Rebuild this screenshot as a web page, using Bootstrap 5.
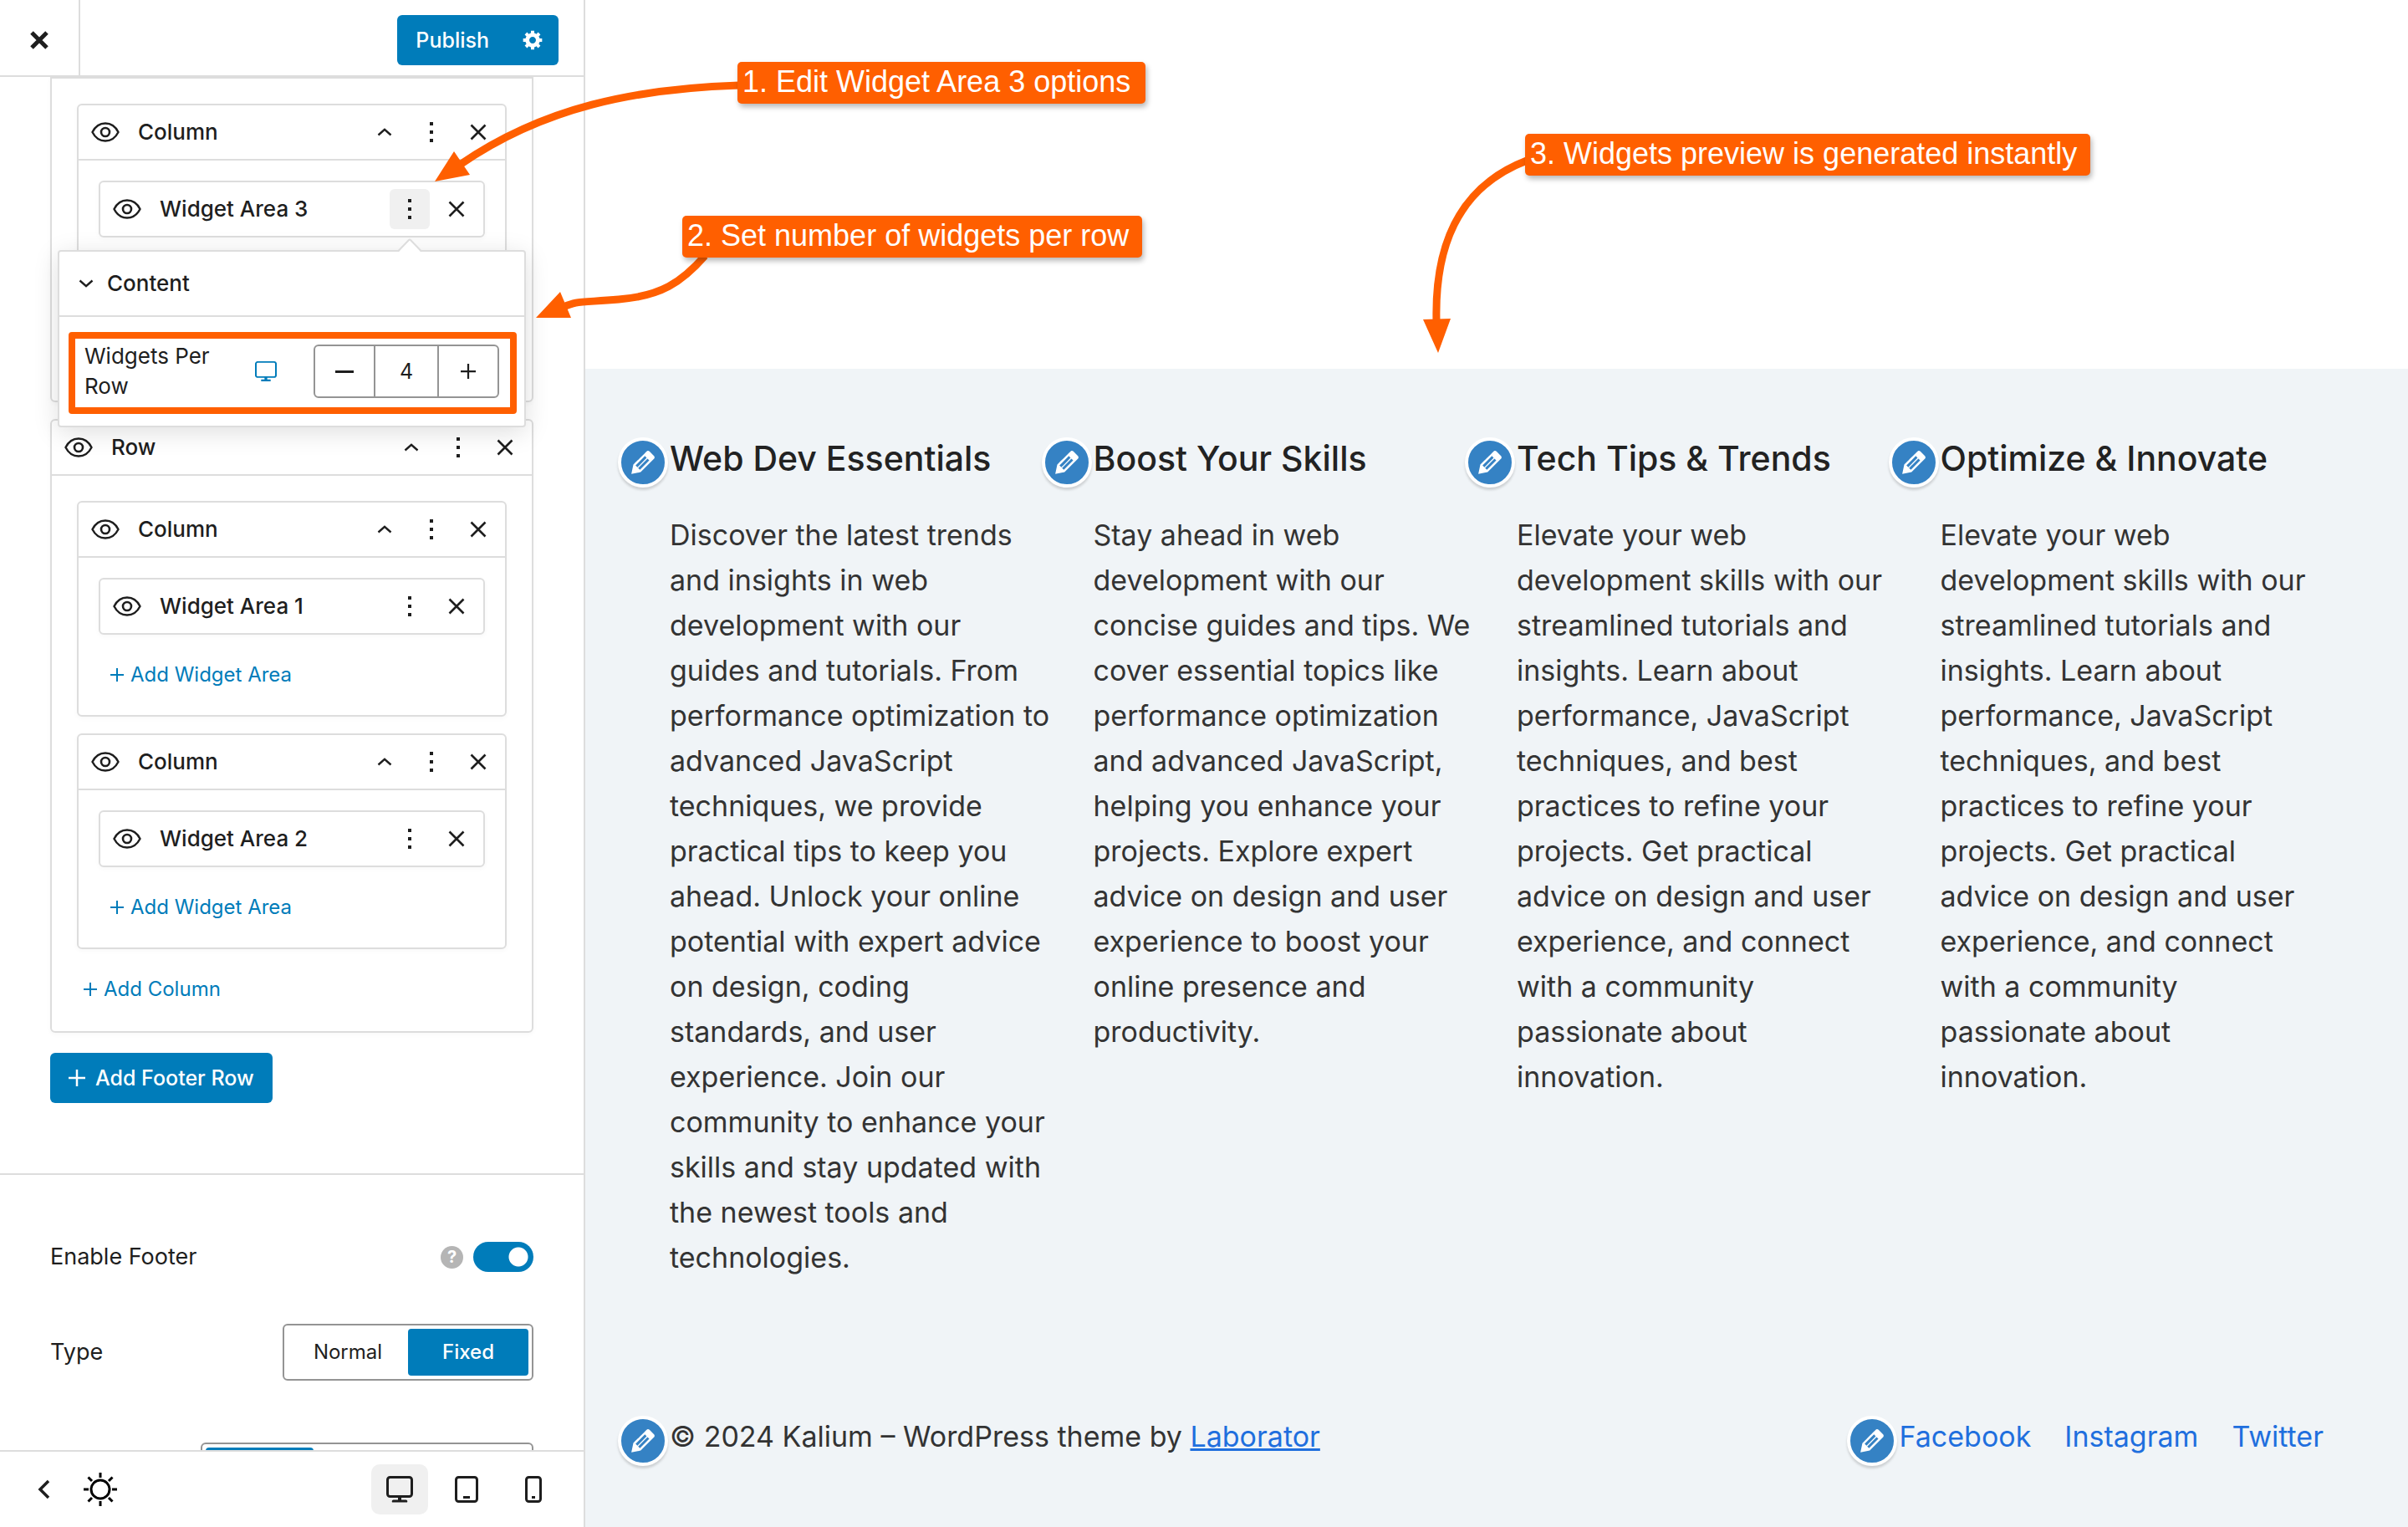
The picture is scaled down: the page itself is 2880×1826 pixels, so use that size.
<!DOCTYPE html>
<html lang="en">
<head>
<meta charset="utf-8">
<meta name="viewport" content="width=device-width, initial-scale=1">
<title>Customizer – Footer</title>
<link href="https://cdn.jsdelivr.net/npm/bootstrap@5.3.0/dist/css/bootstrap.min.css" rel="stylesheet">
<style>
:root{--wp-blue:#007cba;--line:#ddd;--ink:#1e1e1e;--flag:#ff5f00}
body{font-family:Inter,"Liberation Sans",sans-serif;font-size:26px;line-height:36px;color:var(--ink);background:#fff}
svg{display:block;flex:none}
.customizer{width:700px;border-right:2px solid var(--line)}
.bar-top{height:92px;border-bottom:2px solid var(--line);padding-right:30px}
.bar-actions{padding-top:6px}
.close-cell{width:96px;border:0;border-right:2px solid var(--line);background:none;color:var(--ink);padding:5px 0 0}
.btn-wp{--bs-btn-color:#fff;--bs-btn-bg:var(--wp-blue);--bs-btn-border-width:0;--bs-btn-font-size:25px;--bs-btn-font-weight:500;--bs-btn-border-radius:6px;--bs-btn-padding-x:22px;--bs-btn-padding-y:0;--bs-btn-hover-bg:#006ba1;--bs-btn-hover-color:#fff;--bs-btn-line-height:36px;height:60px}
.btn-gear{--bs-btn-padding-x:17px}
.scroller{min-height:0}
.builder{padding:0 60px 84px;border-bottom:2px solid var(--line)}
.panel-box{border:2px solid var(--line);border-radius:6px;background:#fff;box-shadow:0 2px 6px rgba(0,0,0,.03)}
.panel-gap{margin-top:20px}
.box-head{height:64px;padding:0 8px;font-weight:500}
.box-head + .box-body{border-top:2px solid var(--line)}
.row-body{padding:30px 30px 26px}
.col-body{padding:24px}
.row-cut{border-top-left-radius:0;border-top-right-radius:0;padding-bottom:71px}
.col-cut .col-body{padding-bottom:96px}
.tool{width:48px;height:48px;padding:0;border:0;border-radius:6px;background:none;color:var(--ink);display:flex;align-items:center;justify-content:center}
.tool.on{background:#f0f0f0}
.box-name{margin-left:7px}
.add-link{height:48px;margin-top:24px;padding:0 8px;border:0;background:none;color:var(--wp-blue);font-size:24px}
.col-body .add-link{padding-left:14px}
.setting{padding:0 60px;font-size:27px}
.setting-first{padding-top:80px}
.setting-next{padding-top:62px}
.setting-last{padding-top:74px}
.help-set{gap:12px}
.help-dot{width:27px;height:27px;border:0;border-radius:50%;background:#b5b5b5;color:#fff;font-size:20px;font-weight:700;line-height:27px;padding:0}
.form-check-input.wp-switch{width:72px;height:36px;margin:0;border:0;border-radius:18px;background-color:var(--wp-blue);background-image:radial-gradient(circle at 54px 18px,#fff 11px,transparent 12px);background-size:100% 100%;background-position:0 0}
.seg{border:2px solid #949494;border-radius:6px;padding:4px;height:68px}
.seg label{height:56px;line-height:56px;flex:1;text-align:center;border-radius:4px;cursor:pointer;font-size:24px}
.seg .btn-check:checked + label{background:var(--wp-blue);color:#fff;font-weight:500}
.seg-type{width:300px}
.seg-wide{width:398px}
.bar-bottom{height:92px;border-top:2px solid var(--line);padding:0 26px 0 28px;background:#fff}
.theme-tool{margin-left:20px}
.devices{gap:12px}
.device{width:68px;height:60px;border-radius:10px}
.popover-box{position:absolute;left:69px;top:299px;width:560px;background:#fff;border:2px solid var(--line);border-radius:4px;box-shadow:0 6px 30px rgba(0,0,0,.13);z-index:3}
.pop-arrow{position:absolute;left:405px;top:-16px}
.pop-head{height:78px;padding:0 23px;border-bottom:2px solid var(--line);font-weight:500}
.flip{transform:scaleY(-1)}
.pop-body{padding:18px 9px 14px 11px}
.flagged{border:8px solid var(--flag);border-radius:4px;height:98px;padding:0 13px 4px 11px}
.stepper{width:222px;border:2px solid #949494;border-radius:6px;height:64px}
.stepper .tool{width:72px;height:60px}
.stepper input{width:78px;height:60px;border:2px solid #949494;border-width:0 2px;text-align:center;padding:0;font-size:25px;color:var(--ink)}
.w-label{width:170px}
.screen-mini{margin-left:34px}
.stage-gap{height:441px}
.site-foot{background:#f0f4f7;padding:80px 101px 0;color:#333;font-size:34px;line-height:54px}
.site-foot h2{font-size:41px;line-height:54px;font-weight:500;color:#222;margin:0 0 38px;white-space:nowrap}
.site-foot a{color:#1f6fde}
.widgets{--bs-gutter-x:48px}
.edit-dot{position:absolute;right:100%;top:2px;margin-right:2px;width:60px;height:60px;padding:0;border:4px solid #fff;border-radius:50%;background:#3582c4;color:#fff;box-shadow:0 3px 3px rgba(0,0,0,.15);display:flex;align-items:center;justify-content:center}
.copyline{margin-top:160px}
.social{gap:40px}
.arrows{position:absolute;left:0;top:0;z-index:4;pointer-events:none}
.flag-note{position:absolute;z-index:5;height:50px;background:var(--flag);color:#fff;border-radius:5px;box-shadow:2px 4px 6px rgba(0,0,0,.28);font-family:"Liberation Sans",sans-serif;font-size:36px;line-height:48px;white-space:nowrap;padding:0 6px}
.note-1{left:882px;top:74px;width:488px}
.note-2{left:816px;top:258px;width:550px}
.note-3{left:1824px;top:160px;width:676px}
</style>
<script src="https://cdn.jsdelivr.net/npm/bootstrap@5.3.0/dist/js/bootstrap.bundle.min.js"></script>
</head>
<body>
<svg width="0" height="0" class="position-absolute" aria-hidden="true">
  <symbol id="i-eye" viewBox="0 0 34 24"><path d="M1.5 12C5 5 10.500 1.500 17 1.500S29 5 32.500 12C29 19 23.500 22.500 17 22.500S5 19 1.500 12Z" fill="none" stroke="currentColor" stroke-width="2.400"/><circle cx="17" cy="12" r="5" fill="none" stroke="currentColor" stroke-width="2.600"/></symbol>
  <symbol id="i-up" viewBox="0 0 18 10"><path d="M1.500 8.500 9 1.800l7.500 6.700" fill="none" stroke="currentColor" stroke-width="2.400"/></symbol>
  <symbol id="i-dots" viewBox="0 0 4 24"><path d="M0 0h4v4H0zM0 10h4v4H0zM0 20h4v4H0z" fill="currentColor"/></symbol>
  <symbol id="i-x" viewBox="0 0 20 20"><path d="M1.500 1.500l17 17M18.500 1.500l-17 17" fill="none" stroke="currentColor" stroke-width="2.600"/></symbol>
  <symbol id="i-plus" viewBox="0 0 16 16"><path d="M8 0v16M0 8h16" fill="none" stroke="currentColor" stroke-width="2"/></symbol>
  <symbol id="i-screen" viewBox="0 0 32 32"><rect x="1.500" y="1.500" width="29" height="23" rx="3" fill="none" stroke="currentColor" stroke-width="3"/><path d="M14 25h4v3.500h5a2 2 0 0 1 2 3H7a2 2 0 0 1 2-3h5z" fill="currentColor"/></symbol>
  <symbol id="i-pencil" viewBox="0 0 20 20"><path fill="currentColor" d="M13.890 3.390l2.710 2.720c.46.46.42 1.240.03 1.640l-8.010 8.020-5.560 1.160 1.160-5.580s7.600-7.630 7.990-8.030c.39-.39 1.220-.39 1.680.07zm-2.730 2.790l-5.590 5.610 1.110 1.110 5.540-5.650zm-2.970 8.230l5.580-5.600-1.070-1.080-5.590 5.600z"/></symbol>
</svg>

<div class="d-flex vh-100 overflow-hidden position-relative">
  <aside class="customizer d-flex flex-column flex-shrink-0 position-relative">
    <header class="bar-top d-flex align-items-center flex-shrink-0">
      <button class="close-cell h-100 d-flex align-items-center justify-content-center" aria-label="Close"><svg width="22" height="22" viewBox="0 0 22 22"><path d="M2 2l18 18M20 2 2 20" stroke="currentColor" stroke-width="5" fill="none"/></svg></button>
      <div class="bar-actions ms-auto"><div class="btn-group">
        <button class="btn btn-wp">Publish</button>
        <button class="btn btn-wp btn-gear d-flex align-items-center" aria-label="Publish settings"><svg width="28" height="28" viewBox="0 0 19 21"><path fill="currentColor" d="M18 12h-2.180c-.17.7-.44 1.350-.81 1.930l1.540 1.540-2.100 2.100-1.540-1.540c-.58.36-1.230.63-1.910.79V19H8v-2.180c-.68-.16-1.330-.43-1.910-.79l-1.540 1.540-2.120-2.120 1.540-1.540c-.36-.58-.63-1.230-.79-1.910H1V9.030h2.170c.16-.7.44-1.350.8-1.940L2.430 5.550l2.100-2.100 1.540 1.540c.58-.37 1.240-.64 1.930-.81V2h3v2.180c.68.16 1.330.43 1.910.79l1.540-1.540 2.120 2.120-1.540 1.540c.36.59.64 1.240.8 1.940H18V12zm-8.500 1.500c1.660 0 3-1.340 3-3s-1.340-3-3-3-3 1.340-3 3 1.340 3 3 3z"/></svg></button>
      </div></div>
    </header>

    <main class="scroller flex-grow-1 overflow-hidden">
      <section class="builder">
        <div class="panel-box row-cut">
          <div class="row-body">
            <div class="panel-box col-cut">
              <div class="box-head d-flex align-items-center">
                <button class="tool" aria-label="Toggle visibility"><svg width="34" height="24"><use href="#i-eye"/></svg></button>
                <span class="box-name px-2 me-auto">Column</span>
                <div class="d-flex gap-2">
                  <button class="tool" aria-label="Collapse"><svg width="18" height="10"><use href="#i-up"/></svg></button>
                  <button class="tool" aria-label="Options"><svg width="4" height="24"><use href="#i-dots"/></svg></button>
                  <button class="tool" aria-label="Remove"><svg width="20" height="20"><use href="#i-x"/></svg></button>
                </div>
              </div>
              <div class="box-body col-body">
                <div class="panel-box">
                  <div class="box-head d-flex align-items-center">
                    <button class="tool" aria-label="Toggle visibility"><svg width="34" height="24"><use href="#i-eye"/></svg></button>
                    <span class="box-name px-2 me-auto">Widget Area 3</span>
                    <div class="d-flex gap-2">
                      <button class="tool on" aria-label="Options"><svg width="4" height="24"><use href="#i-dots"/></svg></button>
                      <button class="tool" aria-label="Remove"><svg width="20" height="20"><use href="#i-x"/></svg></button>
                    </div>
                  </div>
                </div>
              </div>
            </div>
          </div>
        </div>

        <div class="panel-box panel-gap">
          <div class="box-head d-flex align-items-center">
            <button class="tool" aria-label="Toggle visibility"><svg width="34" height="24"><use href="#i-eye"/></svg></button>
            <span class="box-name px-2 me-auto">Row</span>
            <div class="d-flex gap-2">
              <button class="tool" aria-label="Collapse"><svg width="18" height="10"><use href="#i-up"/></svg></button>
              <button class="tool" aria-label="Options"><svg width="4" height="24"><use href="#i-dots"/></svg></button>
              <button class="tool" aria-label="Remove"><svg width="20" height="20"><use href="#i-x"/></svg></button>
            </div>
          </div>
          <div class="box-body row-body">
            <div class="panel-box">
              <div class="box-head d-flex align-items-center">
                <button class="tool" aria-label="Toggle visibility"><svg width="34" height="24"><use href="#i-eye"/></svg></button>
                <span class="box-name px-2 me-auto">Column</span>
                <div class="d-flex gap-2">
                  <button class="tool" aria-label="Collapse"><svg width="18" height="10"><use href="#i-up"/></svg></button>
                  <button class="tool" aria-label="Options"><svg width="4" height="24"><use href="#i-dots"/></svg></button>
                  <button class="tool" aria-label="Remove"><svg width="20" height="20"><use href="#i-x"/></svg></button>
                </div>
              </div>
              <div class="box-body col-body">
                <div class="panel-box">
                  <div class="box-head d-flex align-items-center">
                    <button class="tool" aria-label="Toggle visibility"><svg width="34" height="24"><use href="#i-eye"/></svg></button>
                    <span class="box-name px-2 me-auto">Widget Area 1</span>
                    <div class="d-flex gap-2">
                      <button class="tool" aria-label="Options"><svg width="4" height="24"><use href="#i-dots"/></svg></button>
                      <button class="tool" aria-label="Remove"><svg width="20" height="20"><use href="#i-x"/></svg></button>
                    </div>
                  </div>
                </div>
                <button class="add-link d-flex align-items-center gap-2"><svg width="16" height="16"><use href="#i-plus"/></svg>Add Widget Area</button>
              </div>
            </div>
            <div class="panel-box panel-gap">
              <div class="box-head d-flex align-items-center">
                <button class="tool" aria-label="Toggle visibility"><svg width="34" height="24"><use href="#i-eye"/></svg></button>
                <span class="box-name px-2 me-auto">Column</span>
                <div class="d-flex gap-2">
                  <button class="tool" aria-label="Collapse"><svg width="18" height="10"><use href="#i-up"/></svg></button>
                  <button class="tool" aria-label="Options"><svg width="4" height="24"><use href="#i-dots"/></svg></button>
                  <button class="tool" aria-label="Remove"><svg width="20" height="20"><use href="#i-x"/></svg></button>
                </div>
              </div>
              <div class="box-body col-body">
                <div class="panel-box">
                  <div class="box-head d-flex align-items-center">
                    <button class="tool" aria-label="Toggle visibility"><svg width="34" height="24"><use href="#i-eye"/></svg></button>
                    <span class="box-name px-2 me-auto">Widget Area 2</span>
                    <div class="d-flex gap-2">
                      <button class="tool" aria-label="Options"><svg width="4" height="24"><use href="#i-dots"/></svg></button>
                      <button class="tool" aria-label="Remove"><svg width="20" height="20"><use href="#i-x"/></svg></button>
                    </div>
                  </div>
                </div>
                <button class="add-link d-flex align-items-center gap-2"><svg width="16" height="16"><use href="#i-plus"/></svg>Add Widget Area</button>
              </div>
            </div>
            <button class="add-link d-flex align-items-center gap-2"><svg width="16" height="16"><use href="#i-plus"/></svg>Add Column</button>
          </div>
        </div>
        <button class="btn btn-wp d-flex align-items-center mt-4"><svg width="20" height="20" class="me-2"><use href="#i-plus"/></svg><span class="ps-1">Add Footer Row</span></button>
      </section>

      <section class="setting setting-first d-flex align-items-center justify-content-between">
        <label for="enableFooter">Enable Footer</label>
        <div class="help-set d-flex align-items-center">
          <button class="help-dot" aria-label="Help">?</button>
          <input class="form-check-input wp-switch" type="checkbox" role="switch" id="enableFooter" checked>
        </div>
      </section>
      <section class="setting setting-next d-flex align-items-center justify-content-between">
        <span id="typeLabel">Type</span>
        <div class="seg seg-type d-flex" role="radiogroup" aria-labelledby="typeLabel">
          <input class="btn-check" type="radio" name="ftype" id="tNormal"><label for="tNormal">Normal</label>
          <input class="btn-check" type="radio" name="ftype" id="tFixed" checked><label for="tFixed">Fixed</label>
        </div>
      </section>
      <section class="setting setting-last d-flex justify-content-end">
        <div class="seg seg-wide d-flex" role="radiogroup" aria-label="Width">
          <input class="btn-check" type="radio" name="fwidth" id="w1" checked><label for="w1" aria-label="Default"></label>
          <input class="btn-check" type="radio" name="fwidth" id="w2"><label for="w2" aria-label="Wide"></label>
          <input class="btn-check" type="radio" name="fwidth" id="w3"><label for="w3" aria-label="Full"></label>
        </div>
      </section>
    </main>

    <footer class="bar-bottom d-flex align-items-center flex-shrink-0">
      <button class="tool" aria-label="Back"><svg width="16" height="24" viewBox="0 0 16 24"><path d="M14 2 4 12l10 10" fill="none" stroke="currentColor" stroke-width="3.500"/></svg></button>
      <button class="tool theme-tool" aria-label="Toggle theme"><svg width="40" height="40" viewBox="0 0 40 40" fill="none" stroke="#000" stroke-width="3"><circle cx="20" cy="20" r="11"/><path d="M20 0v6M20 34v6M0 20h6M34 20h6M5.500 5.500l4.500 4.500M30 30l4.500 4.500M34.500 5.500 30 10M10 30l-4.500 4.500"/></svg></button>
      <div class="devices d-flex ms-auto">
        <button class="tool device on" aria-label="Desktop"><svg width="32" height="32"><use href="#i-screen"/></svg></button>
        <button class="tool device" aria-label="Tablet"><svg width="28" height="32" viewBox="0 0 28 32"><rect x="1.500" y="1.500" width="25" height="29" rx="3" fill="none" stroke="currentColor" stroke-width="3"/><path d="M10 24h8v3h-8z" fill="currentColor"/></svg></button>
        <button class="tool device" aria-label="Mobile"><svg width="20" height="32" viewBox="0 0 20 32"><rect x="1.500" y="1.500" width="17" height="29" rx="3" fill="none" stroke="currentColor" stroke-width="3"/><path d="M8 24h4v3H8z" fill="currentColor"/></svg></button>
      </div>
    </footer>

    <div class="popover-box">
      <svg class="pop-arrow" width="28" height="17" viewBox="0 0 28 17"><path d="M0 17 13 2q1-1 2 0l13 15z" fill="#fff"/><path d="M0 15.500 13 2q1-1 2 0l13 13.500" fill="none" stroke="#ddd" stroke-width="2"/></svg>
      <div class="pop-head d-flex align-items-center"><svg class="flip" width="18" height="10"><use href="#i-up"/></svg><span class="ms-3">Content</span></div>
      <div class="pop-body">
        <div class="flagged d-flex align-items-center">
          <label class="w-label" for="perRow">Widgets Per Row</label>
          <svg class="screen-mini" width="26" height="24" viewBox="0 0 32 32" preserveAspectRatio="none"><rect x="1.200" y="1.200" width="29.600" height="24" rx="3" fill="none" stroke="#007cba" stroke-width="2.500"/><path d="M14 25h4v4h5v3H9v-3h5z" fill="#007cba"/></svg>
          <div class="stepper d-flex ms-auto">
            <button class="tool" aria-label="Decrease"><svg width="22" height="3" viewBox="0 0 22 3"><path d="M0 0h22v3H0z" fill="currentColor"/></svg></button>
            <input id="perRow" type="text" inputmode="numeric" value="4">
            <button class="tool" aria-label="Increase"><svg width="18" height="18"><use href="#i-plus"/></svg></button>
          </div>
        </div>
      </div>
    </div>
  </aside>

  <div class="flex-grow-1 d-flex flex-column">
    <div class="stage-gap flex-shrink-0"></div>
    <div class="site-foot flex-grow-1">
      <div class="row widgets">
        <div class="col-3"><div class="position-relative">
          <button class="edit-dot" aria-label="Edit widget"><svg width="40" height="40"><use href="#i-pencil"/></svg></button>
          <h2>Web Dev Essentials</h2>
          <p class="m-0">Discover the latest trends and insights in web development with our guides and tutorials. From performance optimization to advanced JavaScript techniques, we provide practical tips to keep you ahead. Unlock your online potential with expert advice on design, coding standards, and user experience. Join our community to enhance your skills and stay updated with the newest tools and technologies.</p>
        </div></div>
        <div class="col-3"><div class="position-relative">
          <button class="edit-dot" aria-label="Edit widget"><svg width="40" height="40"><use href="#i-pencil"/></svg></button>
          <h2>Boost Your Skills</h2>
          <p class="m-0">Stay ahead in web development with our concise guides and tips. We cover essential topics like performance optimization and advanced JavaScript, helping you enhance your projects. Explore expert advice on design and user experience to boost your online presence and productivity.</p>
        </div></div>
        <div class="col-3"><div class="position-relative">
          <button class="edit-dot" aria-label="Edit widget"><svg width="40" height="40"><use href="#i-pencil"/></svg></button>
          <h2>Tech Tips &amp; Trends</h2>
          <p class="m-0">Elevate your web development skills with our streamlined tutorials and insights. Learn about performance, JavaScript techniques, and best practices to refine your projects. Get practical advice on design and user experience, and connect with a community passionate about innovation.</p>
        </div></div>
        <div class="col-3"><div class="position-relative">
          <button class="edit-dot" aria-label="Edit widget"><svg width="40" height="40"><use href="#i-pencil"/></svg></button>
          <h2>Optimize &amp; Innovate</h2>
          <p class="m-0">Elevate your web development skills with our streamlined tutorials and insights. Learn about performance, JavaScript techniques, and best practices to refine your projects. Get practical advice on design and user experience, and connect with a community passionate about innovation.</p>
        </div></div>
      </div>
      <div class="copyline d-flex justify-content-between">
        <div class="position-relative">
          <button class="edit-dot" aria-label="Edit copyright"><svg width="40" height="40"><use href="#i-pencil"/></svg></button>
          © 2024 Kalium – WordPress theme by <a href="#">Laborator</a>
        </div>
        <nav class="social position-relative d-flex" aria-label="Social">
          <button class="edit-dot" aria-label="Edit menu"><svg width="40" height="40"><use href="#i-pencil"/></svg></button>
          <a class="text-decoration-none" href="#">Facebook</a>
          <a class="text-decoration-none" href="#">Instagram</a>
          <a class="text-decoration-none" href="#">Twitter</a>
        </nav>
      </div>
    </div>
  </div>

  <svg class="arrows" width="2000" height="450" viewBox="0 0 2000 450" aria-hidden="true">
    <g fill="none" stroke="#ff5f00" stroke-width="9">
      <path d="M884 102C760 106 650 128 550 197"/>
      <path d="M843 306C815 338 790 354 740 358S690 360 674 367"/>
      <path d="M1826 192C1740 225 1716 300 1718 384"/>
    </g>
    <path fill="#ff5f00" d="M520 217l23-36 19 28zM641 380l29-31 13 31zM1702 382l33-1-15 41z"/>
  </svg>
  <div class="flag-note note-1">1. Edit Widget Area 3 options</div>
  <div class="flag-note note-2">2. Set number of widgets per row</div>
  <div class="flag-note note-3">3. Widgets preview is generated instantly</div>
</div>
</body>
</html>
